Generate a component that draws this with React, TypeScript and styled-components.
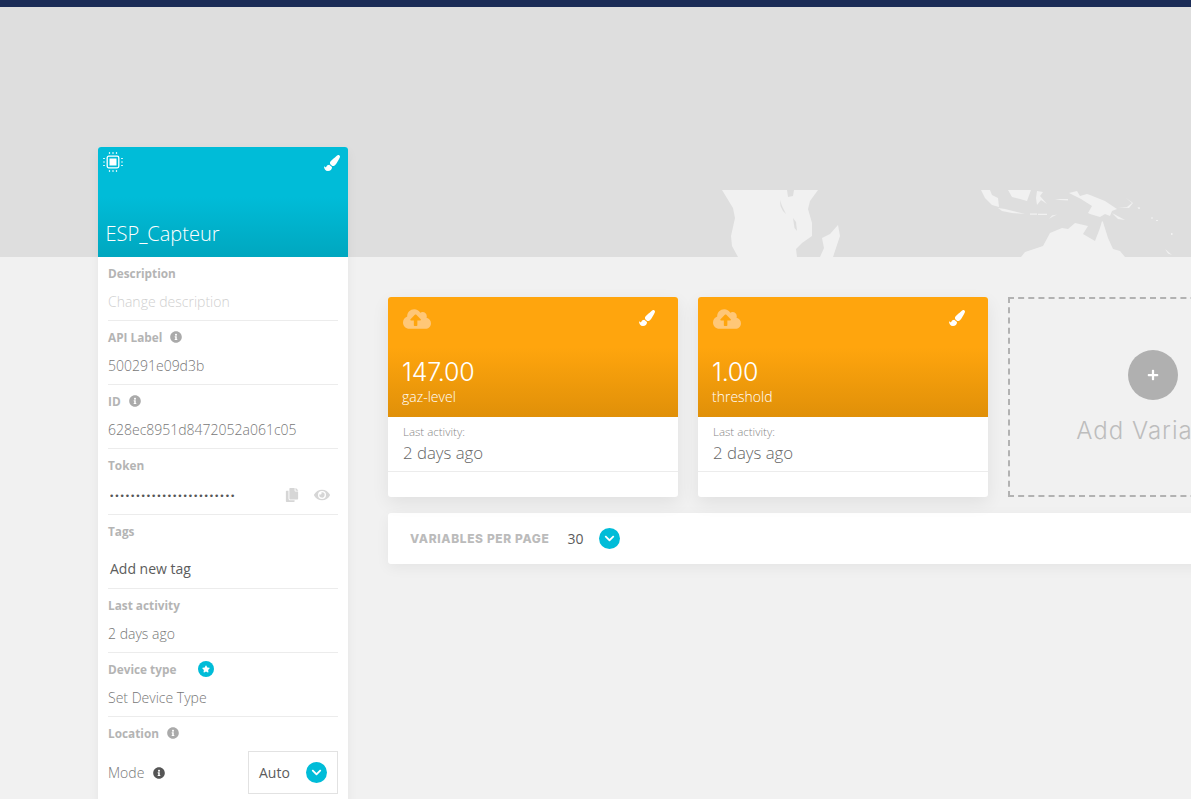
import React from "react";
import styled, { createGlobalStyle } from "styled-components";
import {
  FaInfoCircle,
  FaPaintBrush,
  FaCloudUploadAlt,
  FaCopy,
  FaEye,
  FaChevronDown,
  FaPlus,
  FaStar,
} from "react-icons/fa";

const GlobalStyle = createGlobalStyle`
  html, body { margin: 0; padding: 0; background: #f1f1f1; overflow: hidden; }
  body { font-family: "Open Sans", "Liberation Sans", sans-serif; }
  * { box-sizing: border-box; }
`;

const Page = styled.div`
  width: 1191px;
  height: 799px;
  overflow: hidden;
  background: #f1f1f1;
`;
const TopBar = styled.div`
  height: 7px;
  background: #1b2c57;
`;
const Hero = styled.div`
  position: relative;
  height: 250px;
  background: #dedede;
  overflow: hidden;
`;
const MapArt = styled.svg`
  position: absolute;
  left: 690px;
  top: 173px;
  width: 501px;
  height: 77px;
  fill: #f1f1f1;
`;
const Body = styled.div`
  display: flex;
  align-items: flex-start;
  gap: 40px;
  padding-left: 98px;
`;
const Sidebar = styled.aside`
  position: relative;
  flex: 0 0 250px;
  margin-top: -110px;
  background: #fff;
  border-radius: 3px 3px 0 0;
  box-shadow: 0 4px 12px rgba(0, 0, 0, 0.05);
`;
const DeviceHeader = styled.header`
  position: relative;
  height: 110px;
  padding: 0 7.5px;
  display: flex;
  align-items: flex-end;
  border-radius: 3px 3px 0 0;
  background: linear-gradient(180deg, #00bcd8 0%, #00bcd8 45%, #00a7bf 100%);
`;
const ChipSlot = styled.span`
  position: absolute;
  left: 4px;
  top: 4px;
  width: 22px;
  height: 22px;
  display: flex;
`;
const BrushSlot = styled.span<{ $right: number; $top: number }>`
  position: absolute;
  right: ${(p) => p.$right}px;
  top: ${(p) => p.$top}px;
  color: #fff;
  font-size: 16px;
  line-height: 0;
`;
const DeviceName = styled.h1`
  margin: 0 0 9px;
  font-size: 20px;
  line-height: 28px;
  font-weight: 300;
  color: #fff;
`;
const Rows = styled.div`
  padding: 0 10px;
`;
const Row = styled.section<{ $h: number; $last?: boolean }>`
  height: ${(p) => p.$h}px;
  padding-top: 7px;
  border-bottom: ${(p) => (p.$last ? "none" : "1px solid #ececec")};
`;
const Label = styled.div`
  display: flex;
  align-items: center;
  height: 17px;
  font-size: 11.8px;
  font-weight: 700;
  color: #b4b4b4;
`;
const InfoIcon = styled(FaInfoCircle)<{ $dark?: boolean; $gap?: number }>`
  margin-left: ${(p) => p.$gap ?? 8}px;
  font-size: 12px;
  color: ${(p) => (p.$dark ? "#555" : "#aaa")};
`;
const Value = styled.div<{ $tone?: "faint" | "dark"; $indent?: number; $top?: number }>`
  margin-top: ${(p) => p.$top ?? 11}px;
  padding-left: ${(p) => p.$indent ?? 0}px;
  height: 20px;
  line-height: 20px;
  font-size: 14px;
  font-weight: ${(p) => (p.$tone === "dark" ? 400 : 300)};
  color: ${(p) => (p.$tone === "faint" ? "#cfcfcf" : p.$tone === "dark" ? "#5c5c5c" : "#777")};
  white-space: nowrap;
`;
const TokenLine = styled.div`
  display: flex;
  align-items: center;
  margin-top: 12px;
  height: 20px;
`;
const Dots = styled.span`
  margin-left: 2px;
  width: 175px;
  font-family: "Liberation Sans", sans-serif;
  font-size: 9.5px;
  letter-spacing: 1.93px;
  color: #555;
  white-space: nowrap;
  overflow: hidden;
`;
const TokenIcon = styled.span<{ $gap: number; $size: number }>`
  margin-left: ${(p) => p.$gap}px;
  display: flex;
  color: #d6d6d6;
  font-size: ${(p) => p.$size}px;
`;
const StarBadge = styled.span`
  margin-left: 22px;
  width: 16px;
  height: 16px;
  border-radius: 50%;
  background: #00bcd8;
  color: #fff;
  display: flex;
  align-items: center;
  justify-content: center;
  font-size: 8px;
`;
const ModeLine = styled.div`
  display: flex;
  align-items: center;
  justify-content: space-between;
  margin-top: 10px;
`;
const ModeLabel = styled.div`
  display: flex;
  align-items: center;
  font-size: 14px;
  font-weight: 300;
  color: #777;
`;
const ModeSelect = styled.div`
  width: 90px;
  height: 43px;
  border: 1px solid #e2e2e2;
  padding: 0 10px;
  display: flex;
  align-items: center;
  justify-content: space-between;
  font-size: 14px;
  color: #5c5c5c;
`;
const Chevron = styled.span`
  width: 21px;
  height: 21px;
  border-radius: 50%;
  background: #00bcd8;
  color: #fff;
  display: flex;
  align-items: center;
  justify-content: center;
  font-size: 11px;
`;
const Main = styled.main`
  flex: 0 0 910px;
  padding-top: 40px;
`;
const CardRow = styled.div`
  display: flex;
  gap: 20px;
`;
const VarCard = styled.article`
  flex: 0 0 290px;
  height: 200px;
  background: #fff;
  border-radius: 3px;
  box-shadow: 0 6px 18px rgba(0, 0, 0, 0.07);
`;
const VarHead = styled.header`
  position: relative;
  height: 120px;
  padding: 61px 15px 0 14px;
  color: #fff;
  border-radius: 3px 3px 0 0;
  background: linear-gradient(180deg, #ffa50d 0%, #ffa50d 42%, #e09009 100%);
`;
const CloudSlot = styled.span`
  position: absolute;
  left: 15px;
  top: 8px;
  color: #ffc777;
  font-size: 28px;
  line-height: 0;
`;
const VarValue = styled.div`
  font-family: Inter, "Open Sans", sans-serif;
  font-size: 25px;
  line-height: 28px;
  font-weight: 300;
  letter-spacing: -0.2px;
`;
const VarName = styled.div`
  font-size: 14px;
  line-height: 20px;
  margin-top: 1px;
  font-weight: 300;
`;
const VarBody = styled.div`
  height: 55px;
  padding: 7px 15px 0;
  border-bottom: 1px solid #ececec;
`;
const ActivityLabel = styled.div`
  font-size: 11.5px;
  line-height: 16px;
  font-weight: 300;
  color: #888;
`;
const ActivityValue = styled.div`
  font-size: 16.8px;
  line-height: 25px;
  font-weight: 300;
  color: #666;
`;
const AddCard = styled.div`
  flex: 0 0 290px;
  height: 200px;
  border: 2px dashed #b2b2b2;
  display: flex;
  flex-direction: column;
  align-items: center;
  padding-top: 51px;
`;
const AddCircle = styled.span`
  width: 50px;
  height: 50px;
  border-radius: 50%;
  background: #b0b0b0;
  color: #fff;
  display: flex;
  align-items: center;
  justify-content: center;
  font-size: 12px;
`;
const AddText = styled.div`
  margin-top: 16px;
  font-family: Inter, "Open Sans", sans-serif;
  font-size: 24px;
  line-height: 30px;
  font-weight: 300;
  letter-spacing: 1px;
  color: #bdbdbd;
`;
const PagerBar = styled.div`
  margin-top: 16px;
  height: 51px;
  padding-left: 22px;
  display: flex;
  align-items: center;
  background: #fff;
  border-radius: 3px;
  box-shadow: 0 4px 14px rgba(0, 0, 0, 0.05);
`;
const PagerLabel = styled.span`
  font-family: Inter, "Open Sans", sans-serif;
  font-size: 12px;
  font-weight: 800;
  letter-spacing: 0.62px;
  color: #bbb;
`;
const PagerValue = styled.span`
  margin-left: 18px;
  margin-right: 16px;
  font-size: 14px;
  color: #5c5c5c;
`;

const ChipIcon = () => (
  <svg width="22" height="22" viewBox="0 0 22 22" fill="none">
    <rect x="5.2" y="5.2" width="11.6" height="11.6" rx="1.5" stroke="#fff" strokeWidth="1.3" />
    <rect x="7.5" y="7.5" width="7" height="7" fill="#fff" />
    <g stroke="#fff" strokeWidth="1.2" opacity="0.8">
      <path d="M7.5 1v2M11 1v2M14.5 1v2M7.5 19v2M11 19v2M14.5 19v2M1 7.5h2M1 11h2M1 14.5h2M19 7.5h2M19 11h2M19 14.5h2" />
    </g>
  </svg>
);

const WorldMap = () => (
  <MapArt viewBox="690 180 501 77">
    {/* Africa */}
    <path d="M722 190H787L788 197L793 196L794 190H818L810 201L808 209L812 223L812 236L802 243L796 249L797 257H738L732 246L731 236L735 218L733 208Z" />
    <path d="M780 200L782 206L786 214L783 211L780.5 206Z" fill="#dedede" />
    <path d="M793 218L796 222L797 231L794.5 228Z" fill="#dedede" />
    {/* Madagascar */}
    <path d="M838 225L840 236L833 257H820L824 248L822 238L830 234Z" />
    {/* Sumatra, Borneo, Java, Sulawesi */}
    <path d="M981 190H990L992 195L998 198L999 207L992 205L985 198Z" />
    <path d="M1008 190H1031L1027 201L1020 199L1012 197Z" />
    <path d="M998 208L1005 209L1017 212L1025 214L1012 213L1002 211Z" />
    <path d="M1037 191L1043 192L1040 196L1047 204L1041 200L1037 205L1036 198Z" />
    <path d="M1030 213.5H1037V214.8H1030ZM1038 213.8H1047V215H1038ZM1049 219L1052 215.5L1057 214.5L1052 217Z" />
    <path d="M1055 199H1068V200.5L1060 200Z" />
    {/* New Guinea and nearby islands */}
    <path d="M1069 193L1077 191L1080 196L1087 194L1090 195L1105 201L1117 209L1112 211L1110 216L1105 214L1100 217L1090 214L1088 213L1092 206L1081 199L1073 195Z" />
    <path d="M1112 213L1125 220L1118 219Z" />
    <path d="M1118 207H1127L1132 203L1126 198L1133 203L1129 208Z" />
    <path d="M1137.5 207.5L1139.5 207L1140 209L1138.5 209ZM1151 217.5H1153V218.5H1151ZM1156 220H1158V221H1156ZM1171 233H1172.5V235H1171Z" />
    <path d="M1165 249L1172 255L1168 253.5Z" />
    {/* Australia */}
    <path d="M1021 257L1025 252L1043 246L1050 233L1062 228L1068 229L1075 223L1088 226L1083 234L1095 241L1100 228L1102 221L1103 222L1108 238L1113 249L1120 251L1125 257Z" />
  </MapArt>
);

const Brush = ({ right, top }: { right: number; top: number }) => (
  <BrushSlot $right={right} $top={top}>
    <FaPaintBrush />
  </BrushSlot>
);

const VariableCard = ({ value, name }: { value: string; name: string }) => (
  <VarCard>
    <VarHead>
      <CloudSlot>
        <FaCloudUploadAlt />
      </CloudSlot>
      <Brush right={23} top={13} />
      <VarValue>{value}</VarValue>
      <VarName>{name}</VarName>
    </VarHead>
    <VarBody>
      <ActivityLabel>Last activity:</ActivityLabel>
      <ActivityValue>2 days ago</ActivityValue>
    </VarBody>
  </VarCard>
);

export default function App() {
  return (
    <Page>
      <GlobalStyle />
      <TopBar />
      <Hero>
        <WorldMap />
      </Hero>
      <Body>
        <Sidebar>
          <DeviceHeader>
            <ChipSlot>
              <ChipIcon />
            </ChipSlot>
            <Brush right={8} top={8} />
            <DeviceName>ESP_Capteur</DeviceName>
          </DeviceHeader>
          <Rows>
            <Row $h={64}>
              <Label>Description</Label>
              <Value $tone="faint">Change description</Value>
            </Row>
            <Row $h={64}>
              <Label>API Label<InfoIcon /></Label>
              <Value>500291e09d3b</Value>
            </Row>
            <Row $h={64}>
              <Label>ID<InfoIcon /></Label>
              <Value>628ec8951d8472052a061c05</Value>
            </Row>
            <Row $h={66}>
              <Label>Token</Label>
              <TokenLine>
                <Dots>••••••••••••••••••••••••</Dots>
                <TokenIcon $gap={0} $size={14}><FaCopy /></TokenIcon>
                <TokenIcon $gap={15} $size={16}><FaEye /></TokenIcon>
              </TokenLine>
            </Row>
            <Row $h={74}>
              <Label>Tags</Label>
              <Value $tone="dark" $indent={2} $top={20}>Add new tag</Value>
            </Row>
            <Row $h={64}>
              <Label>Last activity</Label>
              <Value>2 days ago</Value>
            </Row>
            <Row $h={64}>
              <Label>Device type<StarBadge><FaStar /></StarBadge></Label>
              <Value>Set Device Type</Value>
            </Row>
            <Row $h={90} $last>
              <Label>Location<InfoIcon /></Label>
              <ModeLine>
                <ModeLabel>Mode<InfoIcon $dark $gap={9} /></ModeLabel>
                <ModeSelect>
                  Auto
                  <Chevron><FaChevronDown /></Chevron>
                </ModeSelect>
              </ModeLine>
            </Row>
          </Rows>
        </Sidebar>
        <Main>
          <CardRow>
            <VariableCard value="147.00" name="gaz-level" />
            <VariableCard value="1.00" name="threshold" />
            <AddCard>
              <AddCircle><FaPlus /></AddCircle>
              <AddText>Add Variable</AddText>
            </AddCard>
          </CardRow>
          <PagerBar>
            <PagerLabel>VARIABLES PER PAGE</PagerLabel>
            <PagerValue>30</PagerValue>
            <Chevron><FaChevronDown /></Chevron>
          </PagerBar>
        </Main>
      </Body>
    </Page>
  );
}
